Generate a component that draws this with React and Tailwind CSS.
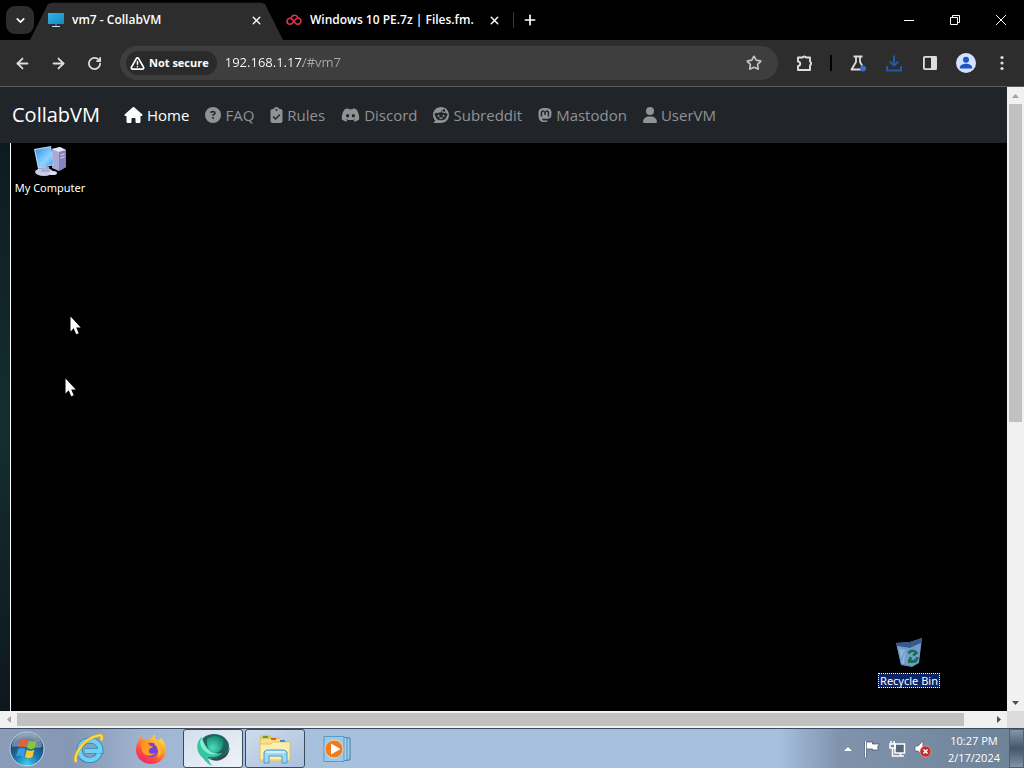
import { ChevronDown, X, Plus, ArrowLeft, ArrowRight, RotateCw, TriangleAlert, Star } from "lucide-react";
import {
  FaHouse,
  FaCircleQuestion,
  FaClipboardCheck,
  FaDiscord,
  FaReddit,
  FaMastodon,
  FaUser,
} from "react-icons/fa6";

const links = [
  { label: "Home", icon: FaHouse, size: "w-[19px]", active: true },
  { label: "FAQ", icon: FaCircleQuestion, size: "w-4" },
  { label: "Rules", icon: FaClipboardCheck, size: "w-[13px]" },
  { label: "Discord", icon: FaDiscord, size: "w-[19px]" },
  { label: "Subreddit", icon: FaReddit, size: "w-4" },
  { label: "Mastodon", icon: FaMastodon, size: "w-3.5" },
  { label: "UserVM", icon: FaUser, size: "w-3.5" },
];

function MonitorIcon() {
  return (
    <svg width="16" height="16" viewBox="0 0 16 16">
      <defs>
        <linearGradient id="screen" x1="0" y1="0" x2="1" y2="1">
          <stop offset="0" stopColor="#35b5e8" />
          <stop offset="1" stopColor="#1686c0" />
        </linearGradient>
      </defs>
      <rect x="0" y="1" width="16" height="11" rx="0.5" fill="url(#screen)" />
      <path d="M7 12h2v2H7z" fill="#1272a8" />
      <path d="M4 14h8v1H4z" fill="#c8dce8" />
    </svg>
  );
}

function FilesIcon() {
  return (
    <svg width="16" height="16" viewBox="0 0 16 16" fill="none" stroke="#e0344f" strokeWidth="1.6" strokeLinecap="round">
      <path d="M7.500 10.200C5.500 13.500 1 12.500 1 9.200 1 6.200 4.500 5.400 6.300 7.500l3.200 3.700c1.800 2 5.500 1.200 5.500-2.200 0-2.800-3.200-4-5-2L8.700 8.300" />
      <path d="M5.300 5.800C6 3 9.500 2.400 11.500 4.800" />
    </svg>
  );
}

function TabBar() {
  return (
    <header className="flex h-10 shrink-0 items-center bg-black pl-1.5 text-white">
      <button aria-label="Search tabs" className="flex size-7 shrink-0 items-center justify-center rounded-[9px] bg-[#2d2d2d]">
        <ChevronDown size={13} strokeWidth={3} />
      </button>
      <div className="-ml-1 flex h-10 w-[253px] shrink-0 items-center gap-2 bg-[#2d2d2d] pr-5 pl-[18px] [clip-path:polygon(0_100%,18px_10%,22px_7%,calc(100%_-_22px)_7%,calc(100%_-_18px)_10%,100%_100%)]">
        <MonitorIcon />
        <span className="flex-1 text-xs font-semibold whitespace-nowrap">vm7 - CollabVM</span>
        <button aria-label="Close tab">
          <X size={13} strokeWidth={2.5} />
        </button>
      </div>
      <div className="flex w-[231px] shrink-0 items-center gap-2 border-r border-[#3a3a3a] pr-3 pl-[3px]">
        <FilesIcon />
        <span className="flex-1 overflow-hidden text-xs font-semibold whitespace-nowrap">
          Windows 10 PE.7z | Files.fm.
        </span>
        <button aria-label="Close tab">
          <X size={13} strokeWidth={2.5} />
        </button>
      </div>
      <button aria-label="New tab" className="ml-2 shrink-0">
        <Plus size={16} strokeWidth={2.5} />
      </button>
      <div className="ml-auto flex h-full">
        <button aria-label="Minimize" className="flex w-[46px] items-center justify-center">
          <svg width="10" height="10" stroke="white">
            <path d="M0 5.500h10" />
          </svg>
        </button>
        <button aria-label="Restore" className="flex w-[46px] items-center justify-center">
          <svg width="10" height="10" fill="none" stroke="white">
            <path d="M.5 2.500h7v7h-7zM2.500 2.500v-2h7v7h-2" />
          </svg>
        </button>
        <button aria-label="Close" className="flex w-[46px] items-center justify-center">
          <svg width="10" height="10" fill="none" stroke="white">
            <path d="M0 0l10 10M10 0L0 10" />
          </svg>
        </button>
      </div>
    </header>
  );
}

function ToolButton({ label, children }) {
  return (
    <button aria-label={label} className="flex size-9 shrink-0 items-center justify-center">
      {children}
    </button>
  );
}

function Toolbar() {
  return (
    <div className="flex h-[47px] shrink-0 items-center border-b border-[#5c5c5c] bg-[#2d2d2d] px-1 text-[#dedede]">
      <ToolButton label="Back"><ArrowLeft size={17} strokeWidth={2.5} /></ToolButton>
      <ToolButton label="Forward"><ArrowRight size={17} strokeWidth={2.5} /></ToolButton>
      <ToolButton label="Reload"><RotateCw size={15} strokeWidth={2.8} /></ToolButton>

      <div className="mx-2 flex h-[34px] min-w-0 flex-1 items-center rounded-full bg-[#3e3e3e] pr-4 pl-1.5">
        <button className="flex h-6 shrink-0 items-center gap-1 rounded-full bg-[#2a2a2a] pr-2 pl-1 text-[11px] font-bold text-white">
          <TriangleAlert size={15} strokeWidth={2.5} />
          Not secure
        </button>
        <input
          aria-label="Address"
          defaultValue="192.168.1.17/#vm7"
          className="ml-2 min-w-0 flex-1 bg-linear-to-r from-white from-[78px] to-[#a8a8a8] to-[78px] bg-clip-text text-[13px] text-transparent outline-none"
        />
        <button aria-label="Bookmark this page">
          <Star size={16} strokeWidth={2.5} className="text-[#c4c4c4]" />
        </button>
      </div>

      <ToolButton label="Extensions">
        <svg width="18" height="18" viewBox="0 0 18 18" fill="none" stroke="currentColor" strokeWidth="1.9" strokeLinejoin="round">
          <path d="M3 3.500h4.500a2 1.800 0 0 1 3.600 0H15V7.600a1.800 2 0 0 1 0 3.700V16H3v-4a2.200 2.200 0 0 0 0-4.400z" />
        </svg>
      </ToolButton>
      <div className="mx-2 h-4 w-0.5 bg-black"></div>
      <ToolButton label="Labs">
        <svg width="18" height="18" viewBox="0 0 18 18" fill="none" stroke="currentColor" strokeWidth="1.8" strokeLinejoin="round">
          <path d="M4.500 2.500h9M7 2.500v5.500L2.500 15.500h10M11 2.500v5.500l2.200 3.500" />
          <circle cx="14" cy="14.500" r="3" fill="#3b6fc4" stroke="none" />
        </svg>
      </ToolButton>
      <ToolButton label="Downloads">
        <svg width="18" height="18" viewBox="0 0 18 18" fill="none" stroke="#2457a6" strokeWidth="2">
          <path d="M9 1.500v10M4.800 7.500L9 11.700l4.200-4.200M2 12v4.500h14V12" />
        </svg>
      </ToolButton>
      <ToolButton label="Side panel">
        <svg width="16" height="16" viewBox="0 0 16 16">
          <rect x="1.9" y="1.9" width="12.2" height="12.2" rx="1" fill="none" stroke="currentColor" strokeWidth="1.8" />
          <path d="M9 1h5.500v14H9z" fill="currentColor" />
        </svg>
      </ToolButton>
      <ToolButton label="Profile">
        <svg width="20" height="20" viewBox="0 0 20 20" fill="#1b55c8">
          <circle cx="10" cy="10" r="10" fill="#d3e3fd" />
          <circle cx="10" cy="6.8" r="3" />
          <path d="M3.800 15.500v-1c0-2.300 3.500-3.700 6.200-3.700s6.200 1.400 6.200 3.700v1z" />
        </svg>
      </ToolButton>
      <ToolButton label="Menu">
        <svg width="4" height="16" viewBox="0 0 4 16" fill="currentColor">
          <circle cx="2" cy="2.5" r="1.6" />
          <circle cx="2" cy="8" r="1.6" />
          <circle cx="2" cy="13.5" r="1.6" />
        </svg>
      </ToolButton>
    </div>
  );
}

function Navbar() {
  return (
    <nav className="flex h-14 shrink-0 items-center bg-[#212529] pl-3">
      <a href="#home" className="mr-4 text-xl text-white">CollabVM</a>
      <div className="flex items-center">
        {links.map(({ label, icon: Icon, size, active }) => (
          <a
            key={label}
            href={"#" + label}
            className={`flex items-center gap-1 px-2 text-[15px] whitespace-nowrap ${active ? "text-white" : "text-[#909294]"}`}
          >
            <Icon className={`h-4 shrink-0 ${size}`} />
            {label}
          </a>
        ))}
      </div>
    </nav>
  );
}

function Pointer({ className }) {
  return (
    <svg width="12" height="20" viewBox="0 0 12 20" fill="white" className={className}>
      <path d="M.5 .5v15l3.200-3.200 2.500 6 2.500-1-2.500-5.800h4.500z" />
    </svg>
  );
}

function ComputerIcon() {
  return (
    <svg width="34" height="32" viewBox="0 0 34 32">
      <defs>
        <linearGradient id="glass" x1="0" y1="0" x2="1" y2="1">
          <stop offset="0" stopColor="#2f8fe8" />
          <stop offset="0.6" stopColor="#8fd4ff" />
          <stop offset="1" stopColor="#3f98e8" />
        </linearGradient>
      </defs>
      <path d="M19 4l8-2 6 3v17l-7 4-7-3z" fill="#a9a8d6" />
      <path d="M19 4l8-2 6 3-7 2z" fill="#e6e6fa" />
      <path d="M26 7l7-2v17l-7 4z" fill="#8583bd" />
      <path d="M27.500 10l4-1.200M27.500 13l4-1.200" stroke="#e0e0f8" />
      <ellipse cx="11" cy="27" rx="9" ry="4" fill="#c9cbe8" />
      <path d="M9 22h7l1 5H8z" fill="#a9abd2" />
      <ellipse cx="20" cy="28" rx="4" ry="2" fill="#dfe0f2" />
      <path d="M1 4l17-3 3 19-16 4z" fill="#b9cdf0" />
      <path d="M2.500 5l15-2.800 2.800 16.800L6 22.800z" fill="url(#glass)" />
    </svg>
  );
}

function RecycleBinIcon() {
  return (
    <svg width="30" height="32" viewBox="0 0 30 32">
      <path d="M2 6l14-1 12-4-3 25-7 4-11-2z" fill="#6388bd" />
      <path d="M2 6l14-1 12-4-1 5-11 5L3 9z" fill="#38588f" />
      <path d="M3 9l13 2 11-5-2.500 19.500L18 29 7 27z" fill="#739ccc" />
      <path d="M5 12l6 1-4 8zM12 12l-2 15-3-1z" fill="#8fb2dc" />
      <g fill="none" stroke="#14704a" strokeWidth="2.600">
        <path d="M14.500 16.500c2-3.500 6-3.500 8-.5l-3.500 2.500" />
        <path d="M23.500 20c-.5 4-5 5.500-8 3.500l1.500-3.500" />
        <path d="M14 25l9-1" />
      </g>
    </svg>
  );
}

function Desktop() {
  return (
    <main className="flex min-h-0 flex-1 bg-black">
      <div className="w-2.5 shrink-0 bg-linear-to-b from-[#0d1b20] via-[#142e30] to-[#0e171c]"></div>
      <div className="relative flex-1 border-l border-white bg-black font-['Noto_Sans',sans-serif] text-[11px] leading-[13px] text-white">
        <button className="absolute top-0.5 left-1 flex w-[70px] flex-col items-center gap-1 whitespace-nowrap">
          <ComputerIcon />
          My Computer
        </button>
        <Pointer className="absolute top-[173px] left-[59px]" />
        <Pointer className="absolute top-[235px] left-[54px]" />
        <button className="absolute right-[63px] bottom-[23px] flex w-[70px] flex-col items-center gap-1 whitespace-nowrap">
          <RecycleBinIcon />
          <span className="border border-dotted border-white bg-[#0a246a] px-px">Recycle Bin</span>
        </button>
      </div>
    </main>
  );
}

function VerticalScrollbar() {
  return (
    <div className="flex w-[17px] shrink-0 flex-col items-center bg-[#f1f1f1]">
      <button aria-label="Scroll up" className="flex h-[17px] items-center">
        <svg width="7" height="4" fill="#a3a3a3"><path d="M0 4l3.500-4L7 4z" /></svg>
      </button>
      <div className="h-[51%] w-[13px] bg-[#c1c1c1]"></div>
      <button aria-label="Scroll down" className="mt-auto flex h-[17px] items-center">
        <svg width="7" height="4" fill="#505050"><path d="M0 0l3.500 4L7 0z" /></svg>
      </button>
    </div>
  );
}

function HorizontalScrollbar() {
  return (
    <div className="flex h-[17px] shrink-0 bg-[#dcdcdc] pr-[17px]">
      <div className="flex flex-1 items-center bg-[#f1f1f1]">
        <button aria-label="Scroll left" className="flex w-[17px] justify-center">
          <svg width="4" height="7" fill="#a3a3a3"><path d="M4 0L0 3.500 4 7z" /></svg>
        </button>
        <div className="h-[13px] w-[94%] bg-[#c1c1c1]"></div>
        <button aria-label="Scroll right" className="ml-auto flex w-[17px] justify-center">
          <svg width="4" height="7" fill="#505050"><path d="M0 0l4 3.500L0 7z" /></svg>
        </button>
      </div>
    </div>
  );
}

function StartOrb() {
  return (
    <svg width="36" height="36" viewBox="0 0 36 36">
      <defs>
        <radialGradient id="orb" cx="0.5" cy="0.95" r="0.9">
          <stop offset="0" stopColor="#3fd0f0" />
          <stop offset="0.4" stopColor="#1c78b0" />
          <stop offset="0.8" stopColor="#1c4468" />
          <stop offset="1" stopColor="#5f7f9c" />
        </radialGradient>
      </defs>
      <circle cx="18" cy="18" r="17" fill="url(#orb)" stroke="#c3d6e6" />
      <path d="M3 16a15 14 0 0 1 30 0c-9 3-21-3-30 0z" fill="#fff" opacity="0.35" />
      <path d="M11.500 9c2.500-2 5-1.500 7 0l-1.800 7.500c-2.700-1.500-5-1.500-7.500 0z" fill="#e8612c" />
      <path d="M20 9.800c3 1.600 5 1.200 7.500-.3l-1.800 7.500c-2.700 1.500-5 1.500-7.500 0z" fill="#8cc63c" />
      <path d="M9 18.200c2.500-1.500 5-1.500 7.500 0L14.700 25.500c-2.700-1.500-5-1.500-7.500 0z" fill="#3d9be0" />
      <path d="M17.800 18.700c2.500 1.500 5 1.500 7.500 0L23.500 26c-2.700 1.500-5 1.500-7.500 0z" fill="#fbc92e" />
    </svg>
  );
}

function ExplorerIcon() {
  return (
    <svg width="32" height="32" viewBox="0 0 32 32">
      <path d="M26.500 20.500C24.500 25 20.500 27 16.500 27 10.500 27 6.500 22.500 6.500 17S11 7.500 17 7.500 27.500 11.500 27.500 18H12" fill="none" stroke="#1f86bd" strokeWidth="6" />
      <path d="M26.500 20.500C24.500 25 20.500 27 16.500 27 10.500 27 6.500 22.500 6.500 17S11 7.500 17 7.500 27.500 11.500 27.500 18H12" fill="none" stroke="#6fd2f4" strokeWidth="4.400" />
      <path d="M3.500 29C-1 25 9 6 25 2.500c4-1 5 1 3 5" fill="none" stroke="#d8a21c" strokeWidth="3.200" />
      <path d="M3.500 29C-1 25 9 6 25 2.500c4-1 5 1 3 5" fill="none" stroke="#fbdc4c" strokeWidth="2.200" />
    </svg>
  );
}

function FirefoxIcon() {
  return (
    <svg width="30" height="32" viewBox="0 0 30 32">
      <defs>
        <linearGradient id="fox" x1="0.85" y1="0" x2="0.2" y2="1">
          <stop offset="0" stopColor="#fff14f" />
          <stop offset="0.4" stopColor="#ff9a2a" />
          <stop offset="0.7" stopColor="#ff4a42" />
          <stop offset="1" stopColor="#ee2470" />
        </linearGradient>
      </defs>
      <path d="M19 1c-1 3 1 5 3 7l3-3c3 3 5 8 5 12 0 8-7 14-15 14S0 25 0 17c0-4 1-7 3-10l1-4 4 4c2-1 4-1 5-1 2 0 4-3 6-5z" fill="url(#fox)" />
      <path d="M10 12c3-3 8-3 11 1 3 5 0 11-6 11-5 0-7-4-6-7l5-2z" fill="#7542e5" />
      <path d="M5 11c4-3 8-1 9 2h3c-1 2-3 2-4 4-1 3 3 5 6 3-2 4-12 4-13-3z" fill="#ff9a24" />
      <path d="M22 9c5 4 5 12 0 16 1-6 0-11-4-14z" fill="#ffb62e" />
    </svg>
  );
}

function SwirlIcon() {
  return (
    <svg width="34" height="34" viewBox="0 0 34 34">
      <defs>
        <radialGradient id="ball" cx="0.35" cy="0.7" r="0.8">
          <stop offset="0" stopColor="#52dcb8" />
          <stop offset="1" stopColor="#0d7f6a" />
        </radialGradient>
      </defs>
      <ellipse cx="18" cy="14.5" rx="15" ry="12.5" fill="#1d6460" />
      <path d="M9 25c8 4 22 1 24.500-10C34 24 25 31 16 28z" fill="#35474e" />
      <path d="M6 5C-1 10 0 21 7 26c2 3 5 6 9 8-3-5-4-7-4-9 5 1 11 0 14-4-8 2-17-4-20-16z" fill="#35c5a0" />
      <path d="M11 7c5-4 12-4 16 0 2 8-3 14-9 14-5-1-8-7-7-14z" fill="url(#ball)" />
      <path d="M6 5c1 9 7 16 15 17-8 2-16-3-17-12z" fill="#8becd0" />
    </svg>
  );
}

function FolderIcon() {
  return (
    <svg width="34" height="32" viewBox="0 0 34 32">
      <path d="M2 4l2-2h8l2 2h8v5h10v20H3z" fill="#e6c35c" />
      <path d="M3 6h20v4h8v18H3z" fill="#f7e08c" />
      <path d="M5 3h5v2H5z" fill="#3eae4a" />
      <path d="M13 5h5v2h-5z" fill="#e25a2a" />
      <path d="M22 7h5v2h-5z" fill="#3a82d8" />
      <path d="M2 11h11l2-2h17v18H2z" fill="#fbeeb0" stroke="#d9b64e" strokeWidth="0.700" />
      <path d="M6 30V19l3-2h17l3 2v11h-5v-7H11v7z" fill="#9bd8f4" stroke="#4c98c8" />
      <path d="M8 19h19" stroke="#e4f7ff" strokeWidth="1.500" />
    </svg>
  );
}

function MediaIcon() {
  return (
    <svg width="28" height="26" viewBox="0 0 28 26">
      <path d="M8 2h19v22H8z" fill="#a5d0ec" stroke="#3b7cab" />
      <path d="M5 1.500h19v23H5z" fill="#a9d3ec" stroke="#4888b5" />
      <path d="M1 .5h20v25H1z" fill="#9bcbea" stroke="#5a9bc6" />
      <circle cx="11" cy="13" r="9" fill="#f07a1e" stroke="#fbd0a2" />
      <path d="M8 7.500v11l9.500-5.500z" fill="white" />
    </svg>
  );
}

const apps = [
  { label: "Internet Explorer", icon: ExplorerIcon },
  { label: "Firefox", icon: FirefoxIcon },
  { label: "Browser", icon: SwirlIcon, open: "bg-linear-to-br from-[#d3dfec] to-[#eef3f8] border border-[#3b4b5e]" },
  { label: "File Explorer", icon: FolderIcon, open: "bg-linear-to-br from-[#d0dcea] to-[#a9c0dc] border border-[#3b4b5e]" },
  { label: "Media Player", icon: MediaIcon },
];

function Taskbar() {
  return (
    <footer className="flex h-10 shrink-0 items-stretch border-t border-[#3c4c60] bg-[linear-gradient(to_right,#8a9cb8,#8497b4_7%,#a0b4d0_14%,#a6c0de_25%,#a6c0de_76%,#8093ad_82%,#6c8296)] text-white">
      <button aria-label="Start" className="flex w-[59px] shrink-0 items-center pl-[9px]">
        <StartOrb />
      </button>
      <div className="flex gap-0.5">
        {apps.map(({ label, icon: Icon, open }) => (
          <button
            key={label}
            aria-label={label}
            className={`flex w-[60px] items-center justify-center rounded-[3px] ${open || ""}`}
          >
            <Icon />
          </button>
        ))}
      </div>
      <div className="ml-auto flex items-center">
        <button aria-label="Show hidden icons" className="mr-3">
          <svg width="8" height="4" fill="white"><path d="M0 4l4-4 4 4z" /></svg>
        </button>
        <svg width="17" height="18" viewBox="0 0 17 18" className="mr-2">
          <path d="M1.500 1v16" stroke="#34495c" strokeWidth="3" />
          <path d="M2.500 2h6v2h7l-2 3 1 3h-6V9h-6z" fill="white" stroke="#34495c" strokeWidth="0.700" />
          <path d="M1.500 1v16" stroke="white" strokeWidth="1.500" />
        </svg>
        <svg width="17" height="18" viewBox="0 0 17 18" className="mr-2" fill="none" stroke="white" strokeWidth="1.500">
          <path d="M6 4h9.500v9H6zM8 16h7M11.500 13v3" fill="#536779" />
          <path d="M1 4h5v4H1zM2 1v3M5 1v3M3.500 8v8H8" />
        </svg>
        <svg width="18" height="18" viewBox="0 0 18 18" className="mr-4">
          <path d="M1 6h3l5-5v15l-5-5H1z" fill="white" stroke="#54687a" strokeWidth="0.800" />
          <circle cx="11.5" cy="11.5" r="5.5" fill="#c92b2b" stroke="#eaa" strokeWidth="0.600" />
          <path d="M9.500 9.500l4 4M13.500 9.500l-4 4" stroke="white" strokeWidth="1.600" />
        </svg>
        <div className="mr-[9px] text-center text-[11px] leading-[17px]">
          <div>10:27 PM</div>
          <div>2/17/2024</div>
        </div>
        <button
          aria-label="Show desktop"
          className="h-full w-[15px] border border-[#4d6175] bg-linear-to-b from-[#8496a6] via-[#44586b] to-[#8294a5]"
        ></button>
      </div>
    </footer>
  );
}

function App() {
  return (
    <div className="flex h-screen flex-col overflow-hidden bg-black font-['Open_Sans','Noto_Sans',sans-serif]">
      <TabBar />
      <Toolbar />
      <div className="flex min-h-0 flex-1">
        <div className="flex min-w-0 flex-1 flex-col">
          <Navbar />
          <Desktop />
        </div>
        <VerticalScrollbar />
      </div>
      <HorizontalScrollbar />
      <Taskbar />
    </div>
  );
}

export default App;
